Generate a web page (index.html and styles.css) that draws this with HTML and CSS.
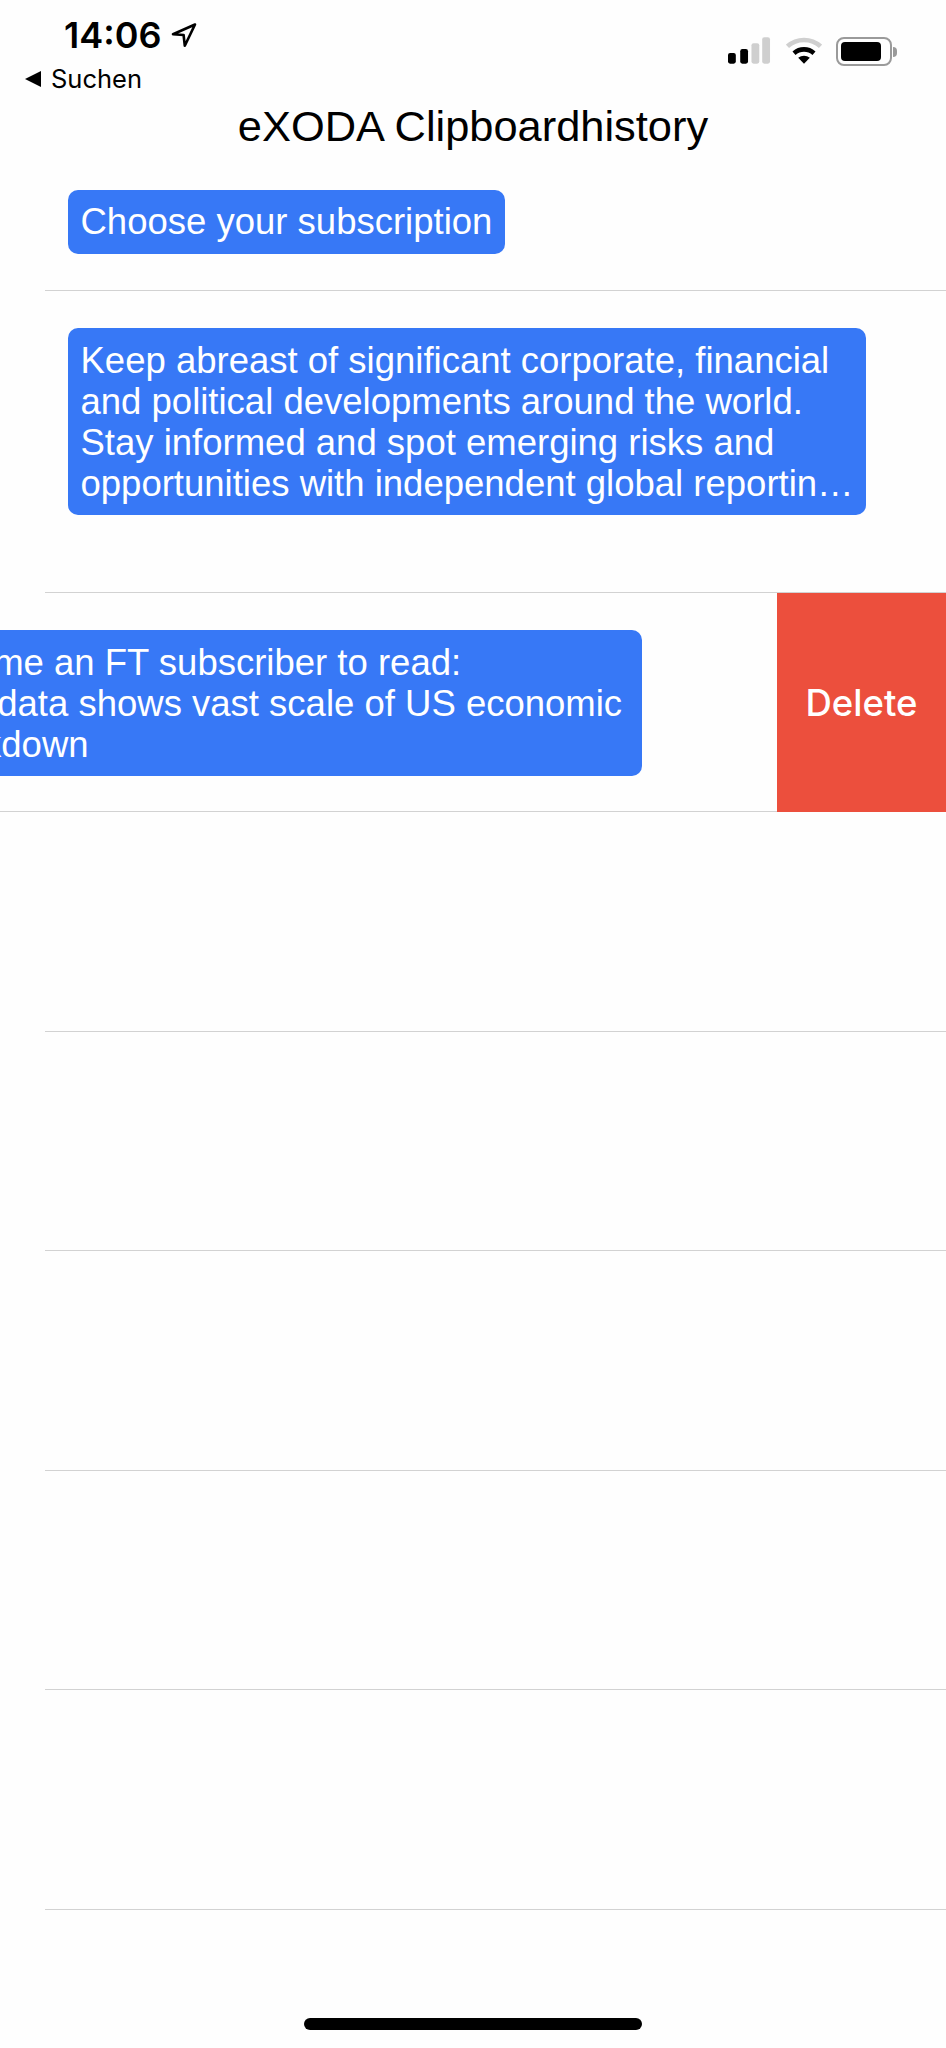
FILE: index.html
```html
<!DOCTYPE html>
<html lang="en">
<head>
<meta charset="utf-8">
<title>eXODA Clipboardhistory</title>
<link rel="stylesheet" href="styles.css">
</head>
<body>
<div class="phone">
  <header class="status">
    <div class="status-left">
      <span class="time">14:06</span>
      <svg class="loc" viewBox="0 0 26 25" aria-hidden="true"><path d="M24 1.5 2 11.2l10.6.8 1.2 10.8z" fill="none" stroke="#000" stroke-width="2.6" stroke-linejoin="round"/></svg>
    </div>
    <div class="status-right">
      <svg class="signal" viewBox="0 0 44 27" aria-hidden="true">
        <rect x="0" y="16" width="8" height="11" rx="2.2" fill="#000"/>
        <rect x="12.500" y="12" width="8" height="15" rx="2.2" fill="#000"/>
        <rect x="24" y="6" width="8" height="21" rx="2.2" fill="#cfcfcf"/>
        <rect x="35" y="0" width="8" height="27" rx="2.2" fill="#cfcfcf"/>
      </svg>
      <svg class="wifi" viewBox="0 0 36 27" aria-hidden="true">
        <path d="M1.500 9.300C10.800 .8 25.200 .8 34.500 9.300" fill="none" stroke="#cfcfcf" stroke-width="4.600"/>
        <path d="M8 16.200c5.800-5.100 14.200-5.100 20 0" fill="none" stroke="#000" stroke-width="4.600"/>
        <path d="M12.200 20.800c3.500-2.900 8.100-2.900 11.600 0L18 26.800z" fill="#000"/>
      </svg>
      <div class="battery"><div class="cell"></div></div>
      <div class="nub"></div>
    </div>
  </header>
  <div class="back">
    <span class="back-arrow"></span>
    <span class="back-label">Suchen</span>
  </div>
  <h1 class="title">eXODA Clipboardhistory</h1>
  <main class="list">
    <section class="row row-one">
      <div class="bubble">Choose your subscription</div>
    </section>
    <section class="row row-two">
      <div class="bubble">Keep abreast of significant corporate, financial<br>and political developments around the world.<br>Stay informed and spot emerging risks and<br>opportunities with independent global reportin…</div>
    </section>
    <section class="row row-swiped">
      <div class="bubble bubble-swiped">Become an FT subscriber to read:<br>Jobs data shows vast scale of US economic<br>breakdown</div>
      <button class="delete">Delete</button>
    </section>
    <section class="row row-empty"></section>
    <section class="row row-empty"></section>
    <section class="row row-empty"></section>
    <section class="row row-empty"></section>
    <section class="row row-empty"></section>
  </main>
  <div class="home-bar"></div>
</div>
</body>
</html>
```

FILE: styles.css
```css
* { box-sizing: border-box; }
html, body { margin: 0; padding: 0; }
body { background: #fefefe; color: #000; font-family: "Liberation Sans", Arial, sans-serif; }
.phone { width: 946px; height: 2048px; overflow: hidden; display: flex; flex-direction: column; }

.status { height: 64px; display: flex; justify-content: space-between; align-items: flex-start; padding: 15px 49px 0 64px; }
.status-left { display: flex; align-items: center; gap: 10px; }
.time { font-family: Inter, sans-serif; font-weight: 600; font-size: 36px; line-height: 40px; }
.loc { width: 26px; height: 25px; }
.status-right { display: flex; align-items: flex-start; padding-top: 22px; }
.signal { width: 43px; height: 27px; margin-right: 15px; }
.wifi { width: 36px; height: 27px; margin-right: 14px; }
.battery { width: 56px; height: 29px; border: 2px solid #9a9a9a; border-radius: 8px; padding: 3px 9px 3px 3px; }
.cell { width: 100%; height: 100%; background: #000; border-radius: 4px; }
.nub { width: 4px; height: 10px; margin: 10px 0 0 1px; background: #9a9a9a; border-radius: 0 4px 4px 0; }

.back { height: 30px; display: flex; align-items: center; padding-left: 25px; gap: 10px; }
.back-arrow { width: 0; height: 0; border-style: solid; border-width: 8px 16px 8px 0; border-color: transparent #000 transparent transparent; }
.back-label { font-family: Inter, sans-serif; font-size: 25.500px; line-height: 30px; }

.title { margin: 0; height: 58px; text-align: center; font-weight: 400; font-size: 43.400px; line-height: 64px; }

.list { display: flex; flex-direction: column; }
.row { position: relative; display: flex; align-items: flex-start; padding-top: 37px; overflow: hidden; }
.row::after { content: ""; position: absolute; left: 45px; right: 0; bottom: 0; height: 1px; background: #d2d2d2; }
.row-one { height: 139px; padding-left: 68px; padding-top: 37.500px; }
.row-two { height: 302px; padding-left: 68px; }
.row-swiped { height: 219px; }
.row-swiped::after { left: 0; }
.row-empty { height: 219.600px; }

.bubble { flex: none; background: #3778f6; color: #fff; font-size: 36.500px; line-height: 41px; padding: 11.500px 12.500px; border-radius: 10px; white-space: nowrap; }
.bubble-swiped { width: 743px; margin-left: -101px; padding-left: 11px; }
.delete { position: absolute; top: 0; right: 0; bottom: 0; width: 169px; border: 0; padding: 0; background: #ec4f3d; color: #fff; font-family: Inter, sans-serif; font-weight: 500; font-size: 36.500px; z-index: 1; }

.home-bar { position: absolute; left: 304px; top: 2018px; width: 338px; height: 12px; border-radius: 6px; background: #000; }
```
